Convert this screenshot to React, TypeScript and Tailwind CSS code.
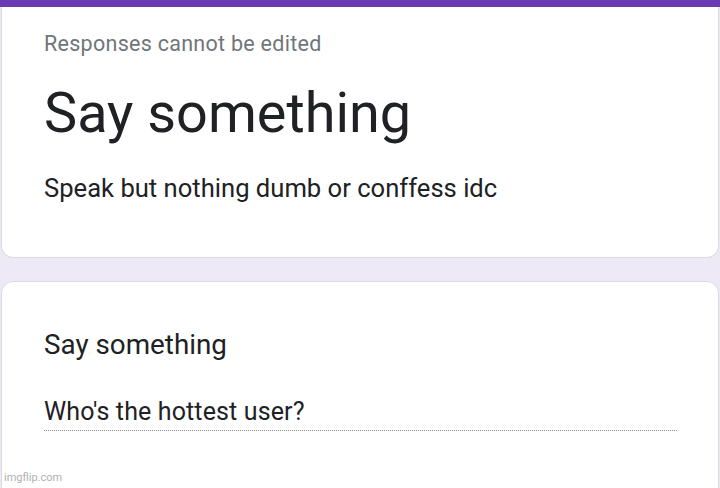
export default function App() {
  return (
    <div
      className="w-[720px] h-[488px] overflow-hidden bg-[#ede9f7] relative"
      style={{ fontFamily: "Roboto, 'Liberation Sans', sans-serif" }}
    >
      <div className="h-[7px] bg-[#6a3ab5]" />
      <div className="mx-[1px] h-[251px] bg-white border-x border-b border-[#dadce0] rounded-b-[12px] px-[42px] pt-[23px]">
        <div className="text-[21.5px] text-[#70757a] leading-[28px] tracking-[0.28px]">Responses cannot be edited</div>
        <div className="text-[55.8px] text-[#202124] leading-[66px] mt-[22px]">Say something</div>
        <div className="text-[25.6px] text-[#202124] leading-[32px] mt-[26px]">Speak but nothing dumb or conffess idc</div>
      </div>
      <div className="mx-[1px] mt-[23px] h-[220px] bg-white border border-[#dadce0] rounded-t-[12px] px-[42px] pt-[46px]">
        <div className="text-[27.8px] text-[#202124] leading-[34px]">Say something</div>
        <div className="mt-[35px] w-[633px] border-b border-dotted border-[#8a8a8a] pb-[3px]">
          <div className="text-[25px] text-[#202124] leading-[30px] tracking-[0.13px]">Who's the hottest user?</div>
        </div>
      </div>
      <div className="absolute left-[4px] bottom-[3px] text-[11px] text-[#b0b0b0] leading-[14px]">imgflip.com</div>
    </div>
  );
}
